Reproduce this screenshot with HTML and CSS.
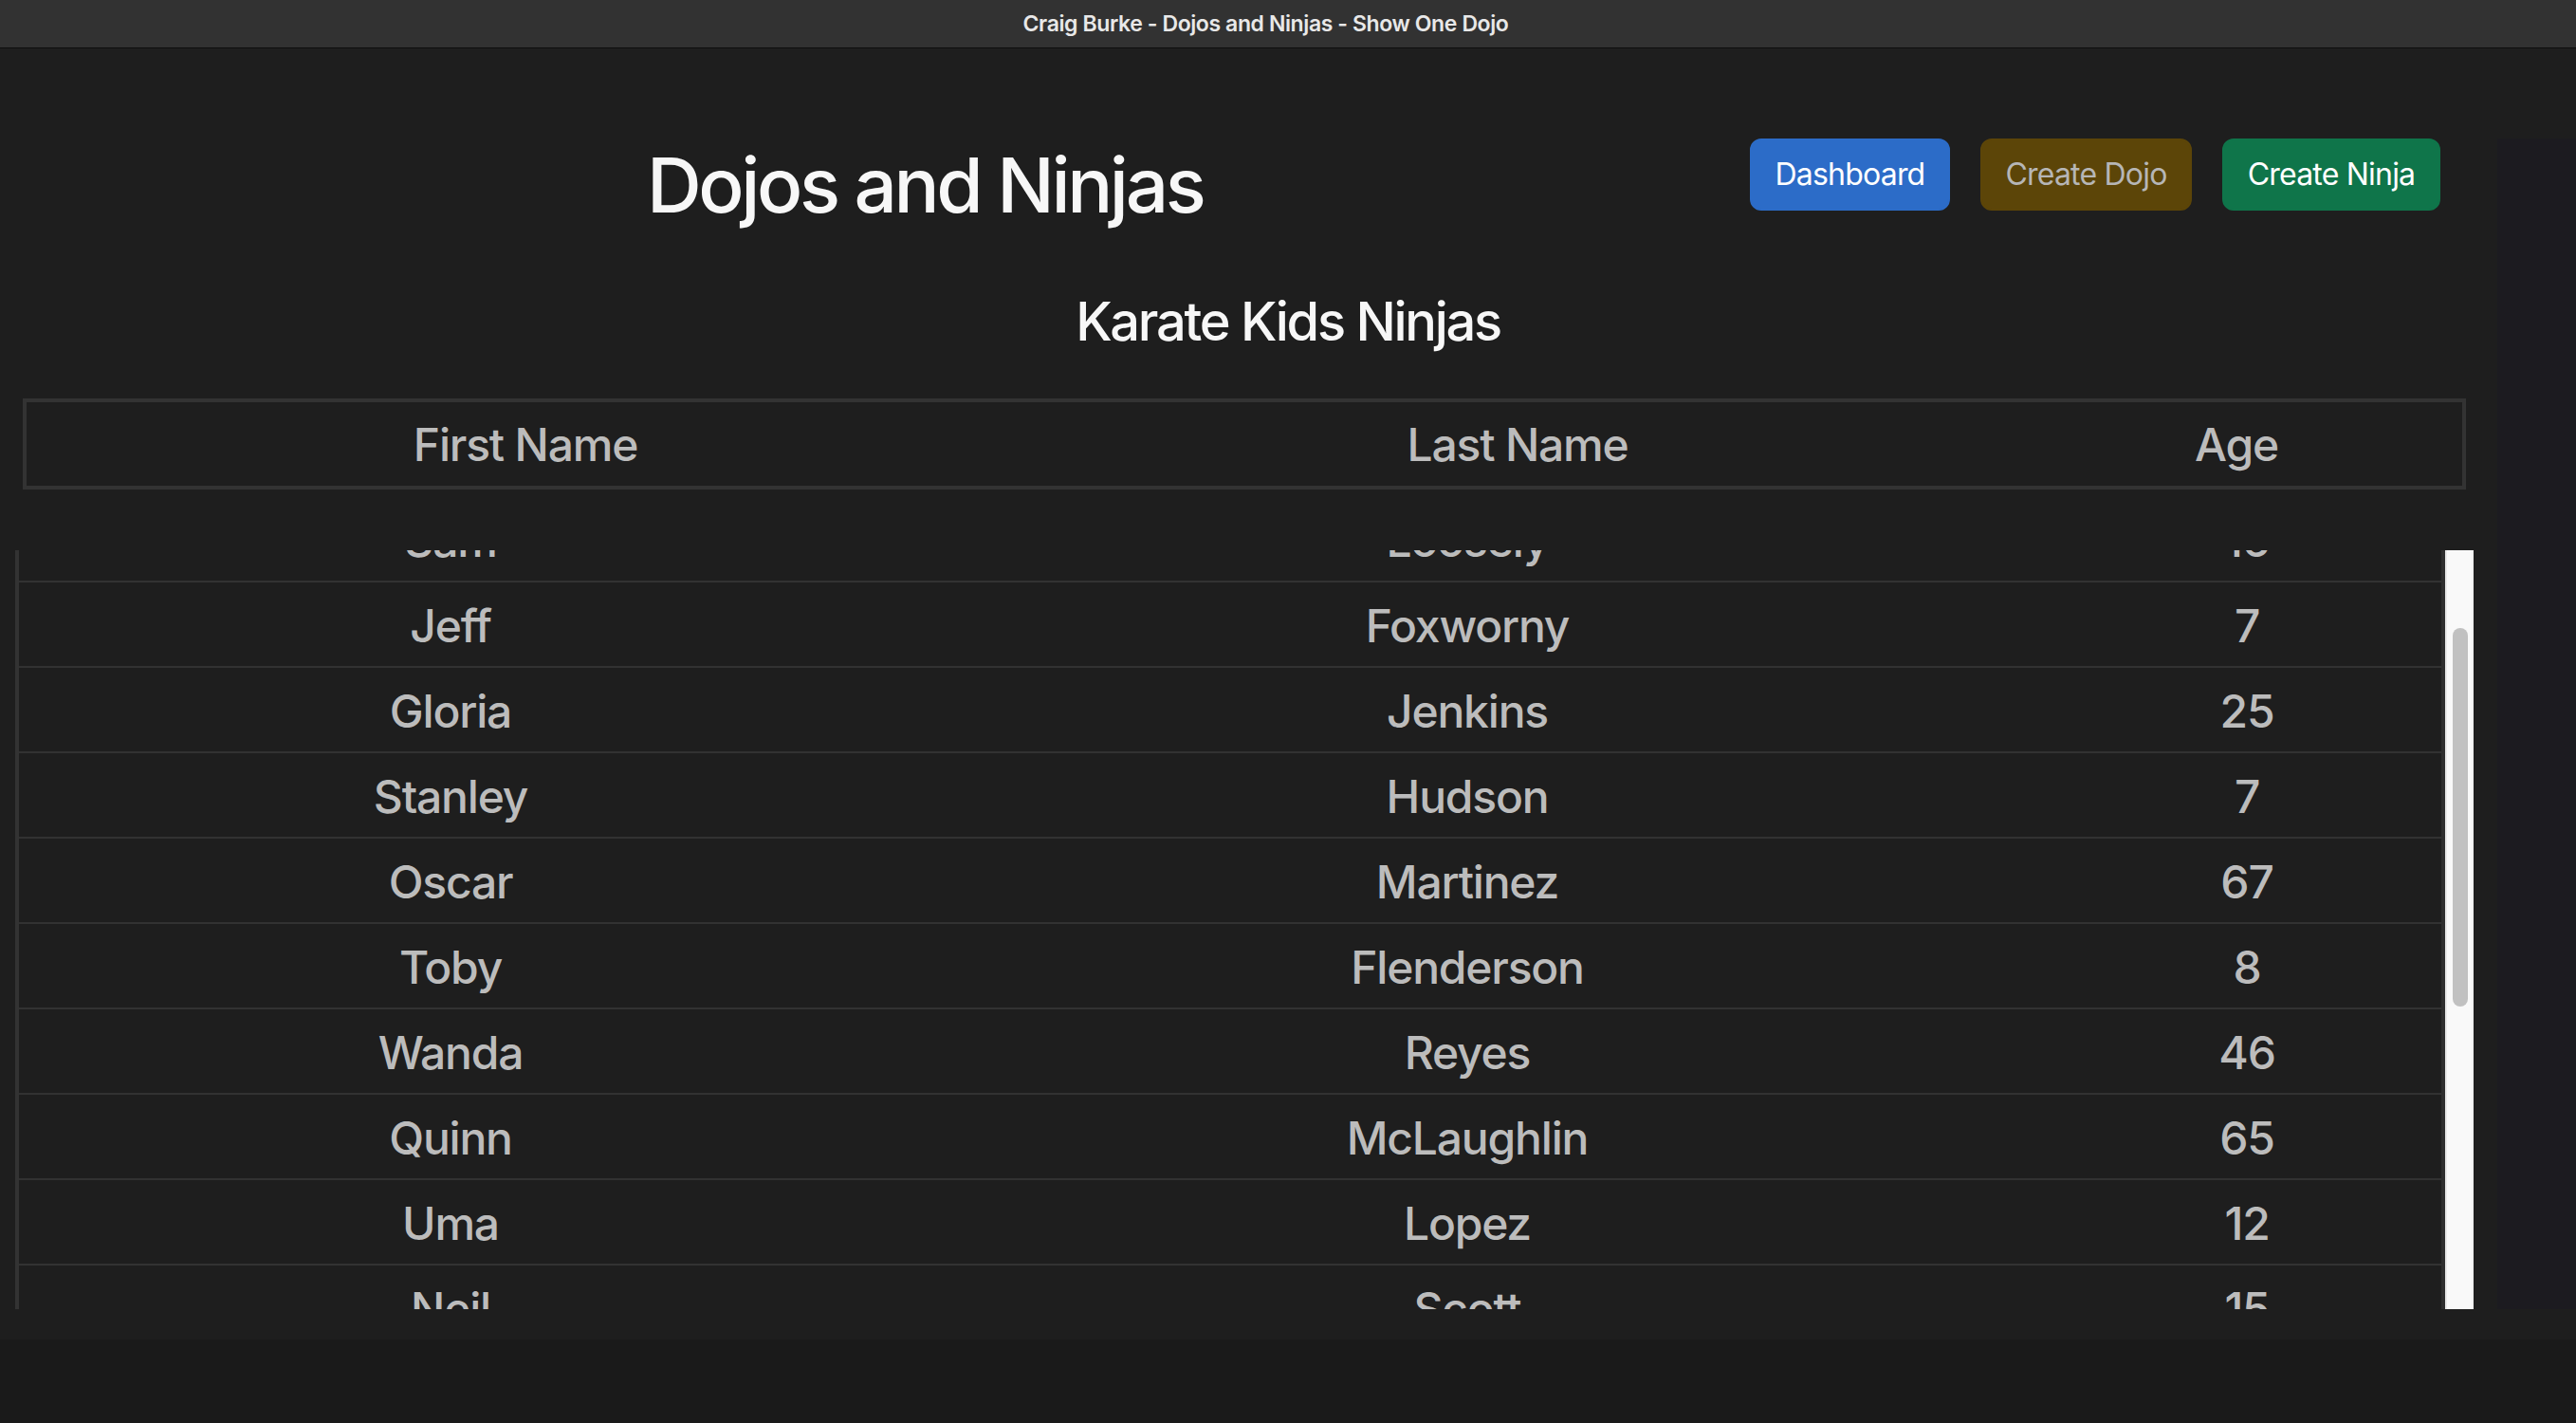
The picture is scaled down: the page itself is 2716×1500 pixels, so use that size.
FILE: index.html
```html
<!DOCTYPE html>
<html lang="en">
<head>
<meta charset="utf-8">
<title>Craig Burke - Dojos and Ninjas - Show One Dojo</title>
<link rel="stylesheet" href="styles.css">
</head>
<body>
<div class="titlebar"><span class="titlebar-text">Craig Burke - Dojos and Ninjas - Show One Dojo</span></div>
<div class="window">
  <main class="page">
    <header class="top">
      <h1 class="title">Dojos and Ninjas</h1>
      <nav class="actions">
        <a class="btn btn-blue" href="#">Dashboard</a>
        <a class="btn btn-brown" href="#">Create Dojo</a>
        <a class="btn btn-green" href="#">Create Ninja</a>
      </nav>
    </header>
    <h3 class="dojo-name">Karate Kids Ninjas</h3>
    <table class="head-table">
      <thead>
        <tr><th class="c1">First Name</th><th class="c2">Last Name</th><th class="c3">Age</th></tr>
      </thead>
    </table>
    <div class="scroll-wrap">
      <div class="scroll-body" id="ninjaScroll">
        <table class="body-table">
          <tbody>
            <tr><td class="c1">Amy</td><td class="c2">Sanders</td><td class="c3">22</td></tr>
            <tr><td class="c1">Sam</td><td class="c2">Loosely</td><td class="c3">16</td></tr>
            <tr><td class="c1">Jeff</td><td class="c2">Foxworny</td><td class="c3">7</td></tr>
            <tr><td class="c1">Gloria</td><td class="c2">Jenkins</td><td class="c3">25</td></tr>
            <tr><td class="c1">Stanley</td><td class="c2">Hudson</td><td class="c3">7</td></tr>
            <tr><td class="c1">Oscar</td><td class="c2">Martinez</td><td class="c3">67</td></tr>
            <tr><td class="c1">Toby</td><td class="c2">Flenderson</td><td class="c3">8</td></tr>
            <tr><td class="c1">Wanda</td><td class="c2">Reyes</td><td class="c3">46</td></tr>
            <tr><td class="c1">Quinn</td><td class="c2">McLaughlin</td><td class="c3">65</td></tr>
            <tr><td class="c1">Uma</td><td class="c2">Lopez</td><td class="c3">12</td></tr>
            <tr><td class="c1">Neil</td><td class="c2">Scott</td><td class="c3">15</td></tr>
            <tr><td class="c1">Kevin</td><td class="c2">Malone</td><td class="c3">11</td></tr>
            <tr><td class="c1">Angela</td><td class="c2">Martin</td><td class="c3">9</td></tr>
            <tr><td class="c1">Ryan</td><td class="c2">Howard</td><td class="c3">14</td></tr>
            <tr><td class="c1">Pam</td><td class="c2">Beesly</td><td class="c3">10</td></tr>
            <tr><td class="c1">Dwight</td><td class="c2">Schrute</td><td class="c3">13</td></tr>
            <tr><td class="c1">Holly</td><td class="c2">Flax</td><td class="c3">8</td></tr>
          </tbody>
        </table>
      </div>
      <div class="scrollbar"><div class="scrollbar-thumb"></div></div>
    </div>
  </main>
  <aside class="side-panel"></aside>
</div>
<div class="bottom-band"></div>
<script src="script.js"></script>
</body>
</html>
```

FILE: styles.css
```css
html, body {
  margin: 0;
  padding: 0;
}
body {
  width: 2716px;
  height: 1500px;
  overflow: hidden;
  background: #1a1a1a;
  font-family: Inter, "Noto Sans", sans-serif;
  color: #f4f4f4;
}

.titlebar {
  height: 50px;
  background: #323232;
  border-bottom: 1px solid #0e0e0e;
  display: flex;
  align-items: center;
  justify-content: center;
  padding-right: 47px;
}
.titlebar-text {
  font-size: 23px;
  font-weight: 600;
  color: #e8e8e8;
  letter-spacing: -0.4px;
}

.window {
  display: flex;
  height: 1361px;
  background: #1e1e1e;
}
.page {
  width: 2633px;
  padding-top: 95px;
  box-sizing: border-box;
}
.side-panel {
  flex: 1;
  margin-top: 95px;
  height: 1234px;
  background: #1c1b20;
}

.top {
  display: flex;
  align-items: flex-start;
  padding-right: 60px;
}
.title {
  margin: 1px 0 0 682px;
  font-size: 80px;
  line-height: 96px;
  font-weight: 500;
  letter-spacing: -3.4px;
  color: #f7f7f7;
}
.actions {
  margin-left: auto;
  display: flex;
  gap: 32px;
}
.btn {
  display: block;
  box-sizing: border-box;
  height: 76px;
  padding: 0;
  border: 2px solid transparent;
  border-radius: 12px;
  font-size: 32px;
  line-height: 72px;
  text-align: center;
  white-space: nowrap;
  text-decoration: none;
  letter-spacing: -0.8px;
}
.btn-blue {
  width: 211px;
  background: #2c6cc8;
  border-color: #2c6cc8;
  color: #ffffff;
}
.btn-brown {
  width: 223px;
  background: #5c4508;
  border-color: #5c4508;
  color: #b6b6b6;
}
.btn-green {
  width: 230px;
  background: #0f754a;
  border-color: #0f754a;
  color: #ffffff;
}

.dojo-name {
  margin: 63px -83px 0 0;
  text-align: center;
  font-size: 56px;
  line-height: 67px;
  font-weight: 500;
  letter-spacing: -2.3px;
  color: #f7f7f7;
}

.head-table,
.body-table {
  border-spacing: 0;
  table-layout: fixed;
  color: #bcbcbc;
  font-size: 48px;
  font-weight: 500;
  letter-spacing: -1.2px;
}
.head-table {
  margin: 47px 0 0 24px;
  width: 2576px;
  border: 4px solid #333333;
}
.head-table th {
  padding: 2px 0 0;
  line-height: 86px;
  font-weight: 500;
  text-align: center;
}
.head-table .c1 { width: 1052px; }
.head-table .c2 { width: 1040px; }
.head-table .c3 { width: 476px; }

.scroll-wrap {
  display: flex;
  margin: 64px 0 0 16px;
  width: 2592px;
  height: 800px;
}
.scroll-body {
  width: 2562px;
  height: 800px;
  overflow: hidden;
}
.scrollbar {
  width: 30px;
  height: 800px;
  background: #f9f9f9;
  box-shadow: inset 2px 0 0 #e9e9e9, inset -2px 0 0 #efefef;
}
.scrollbar-thumb {
  margin: 82px 0 0 8px;
  width: 16px;
  height: 399px;
  border-radius: 8px;
  background: #c1c1c1;
}
.body-table {
  width: 2562px;
  border-left: 4px solid #333333;
  border-right: 4px solid #2e2e2e;
}
.body-table td {
  padding: 3px 0 0;
  line-height: 85px;
  text-align: center;
  border-bottom: 2px solid #323232;
  white-space: nowrap;
}
.body-table .c1 { width: 910px; }
.body-table .c2 { width: 1234px; }
.body-table .c3 { width: 410px; }

.bottom-band {
  height: 88px;
  background: #1a1a1a;
}
```

FILE: script.js
```js
(function () {
  var box = document.getElementById('ninjaScroll');
  function setScroll() { box.scrollTop = 146; }
  setScroll();
  document.addEventListener('DOMContentLoaded', setScroll);
  window.addEventListener('load', setScroll);
})();
```
